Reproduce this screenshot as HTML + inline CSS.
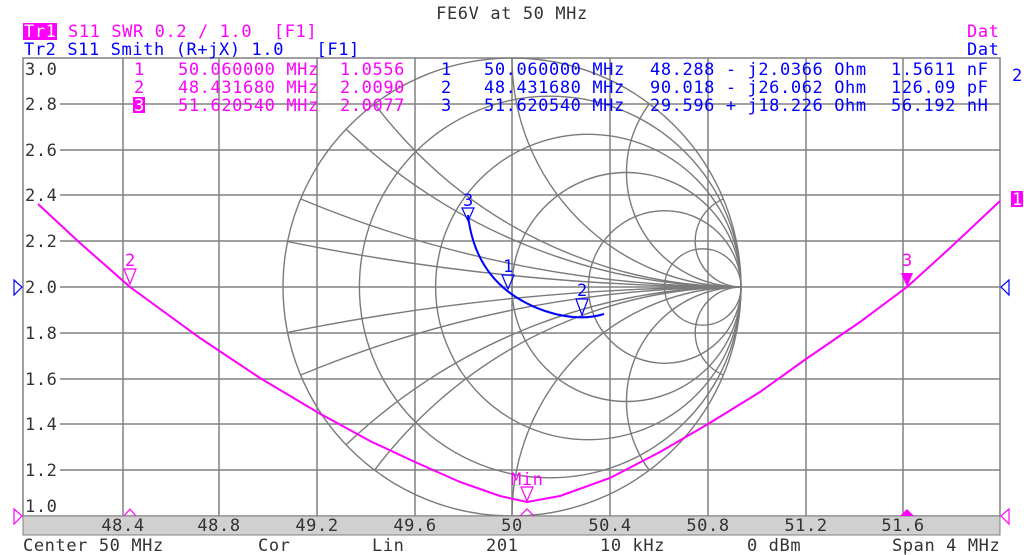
<!DOCTYPE html>
<html><head><meta charset="utf-8"><style>
html,body{margin:0;padding:0;background:#fff;width:1024px;height:555px;overflow:hidden;}
svg{display:block;}
text{font-family:"DejaVu Sans Mono","Liberation Mono",monospace;font-size:17px;letter-spacing:0.6px;}
</style></head><body>
<svg width="1024" height="555" viewBox="0 0 1024 555" xmlns="http://www.w3.org/2000/svg">
<defs><clipPath id="uc"><circle cx="512" cy="287" r="229"/></clipPath></defs>
<rect width="1024" height="555" fill="#fff"/>
<g stroke="#808080" stroke-width="1.5" fill="none">
<rect x="23" y="58" width="977" height="458"/>
<path d="M123 58V516M219 58V516M317 58V516M415 58V516M512 58V516M610 58V516M708 58V516M806 58V516M903 58V516"/>
<path d="M60 104H1000M60 150H1000M60 195H1000M60 241H1000M60 287H1000M60 333H1000M60 379H1000M60 424H1000M60 470H1000"/>
</g>
<g stroke="#7a7a7a" stroke-width="1.4" fill="none">
<circle cx="512" cy="287" r="229"/>
<circle cx="550.2" cy="287" r="190.8"/>
<circle cx="588.3" cy="287" r="152.7"/>
<circle cx="626.5" cy="287" r="114.5"/>
<circle cx="664.7" cy="287" r="76.3"/>
<circle cx="702.8" cy="287" r="38.2"/>
<g clip-path="url(#uc)">
<circle cx="741" cy="-858" r="1145"/><circle cx="741" cy="1432" r="1145"/>
<circle cx="741" cy="-171" r="458"/><circle cx="741" cy="745" r="458"/>
<circle cx="741" cy="58" r="229"/><circle cx="741" cy="516" r="229"/>
<circle cx="741" cy="172.5" r="114.5"/><circle cx="741" cy="401.5" r="114.5"/>
<circle cx="741" cy="241.2" r="45.8"/><circle cx="741" cy="332.8" r="45.8"/>
<circle cx="741" cy="-286" r="573"/><circle cx="741" cy="860" r="573"/>
<circle cx="741" cy="-1999" r="2286"/><circle cx="741" cy="2573" r="2286"/>
</g>
</g>
<g fill="#333">
<rect x="24" y="59" width="36" height="20" fill="#fff"/>
<text x="25" y="75">3.0</text>
<rect x="24" y="95" width="36" height="18" fill="#fff"/><text x="25" y="110">2.8</text>
<rect x="24" y="141" width="36" height="18" fill="#fff"/><text x="25" y="156">2.6</text>
<rect x="24" y="186" width="36" height="18" fill="#fff"/><text x="25" y="201">2.4</text>
<rect x="24" y="232" width="36" height="18" fill="#fff"/><text x="25" y="247">2.2</text>
<rect x="24" y="278" width="36" height="18" fill="#fff"/><text x="25" y="293">2.0</text>
<rect x="24" y="324" width="36" height="18" fill="#fff"/><text x="25" y="339">1.8</text>
<rect x="24" y="370" width="36" height="18" fill="#fff"/><text x="25" y="385">1.6</text>
<rect x="24" y="415" width="36" height="18" fill="#fff"/><text x="25" y="430">1.4</text>
<rect x="24" y="461" width="36" height="18" fill="#fff"/><text x="25" y="476">1.2</text>
<rect x="24" y="495" width="36" height="20" fill="#fff"/><text x="25" y="512">1.0</text>
</g>
<rect x="23" y="516" width="977" height="19" fill="#d0d0d0" stroke="#808080" stroke-width="1"/>
<g fill="#333" text-anchor="middle">
<text x="123" y="531">48.4</text><text x="219" y="531">48.8</text><text x="317" y="531">49.2</text><text x="415" y="531">49.6</text><text x="512" y="531">50</text><text x="610" y="531">50.4</text><text x="708" y="531">50.8</text><text x="806" y="531">51.2</text><text x="903" y="531">51.6</text>
</g>
<g fill="#333">
<text x="23" y="551">Center 50 MHz</text><text x="258" y="551">Cor</text><text x="372" y="551">Lin</text><text x="486" y="551">201</text><text x="600" y="551">10 kHz</text><text x="747" y="551">0 dBm</text><text x="892" y="551">Span 4 MHz</text>
<text x="512" y="19" text-anchor="middle">FE6V at 50 MHz</text>
</g>
<rect x="23" y="23" width="34" height="17" fill="#ff00ff"/>
<text x="24" y="37" fill="#fff">Tr1</text>
<text x="68" y="37" fill="#ff00ff" xml:space="preserve">S11 SWR 0.2 / 1.0  [F1]</text>
<text x="24" y="55" fill="#0000ff" xml:space="preserve">Tr2 S11 Smith (R+jX) 1.0   [F1]</text>
<text x="967" y="37" fill="#ff00ff">Dat</text>
<text x="967" y="55" fill="#0000ff">Dat</text>
<g fill="#ff00ff" xml:space="preserve">
<text x="134" y="75">1</text><text x="178" y="75">50.060000 MHz</text><text x="340" y="75">1.0556</text>
<text x="134" y="93">2</text><text x="178" y="93">48.431680 MHz</text><text x="340" y="93">2.0090</text>
<rect x="133" y="97" width="12" height="16"/><text x="134" y="111" fill="#fff">3</text><text x="178" y="111">51.620540 MHz</text><text x="340" y="111">2.0077</text>
</g>
<g fill="#0000ff" xml:space="preserve">
<text x="441" y="75">1</text><text x="484" y="75">50.060000 MHz</text><text x="650" y="75">48.288 - j2.0366 Ohm</text><text x="891" y="75">1.5611 nF</text>
<text x="441" y="93">2</text><text x="484" y="93">48.431680 MHz</text><text x="650" y="93">90.018 - j26.062 Ohm</text><text x="891" y="93">126.09 pF</text>
<text x="441" y="111">3</text><text x="484" y="111">51.620540 MHz</text><text x="650" y="111">29.596 + j18.226 Ohm</text><text x="891" y="111">56.192 nH</text>
<text x="1012" y="81">2</text>
</g>
<path d="M38 204 L80 243 L130 287 L200 338 L260 378 L317 412 L370 441 L415 462 L460 482 L500 496 L527 502 L560 496 L610 478 L660 452 L708 424 L760 392 L806 359 L860 322 L907 287 L950 248 L1000 201" fill="none" stroke="#ff00ff" stroke-width="2"/>
<path d="M468 215 Q476 287 545 311 Q578 322 604 314" fill="none" stroke="#0000ff" stroke-width="2"/>
<g fill="none" stroke="#ff00ff" stroke-width="1.2">
<path d="M124 269H136L130 284Z"/>
<path d="M521 487H533L527 501Z"/>
<path d="M124 516L130 509L136 516"/>
<path d="M520 516L527 509L534 516"/>
<path d="M14 509L22 516L14 524Z"/>
<path d="M1009 509L1001 516L1009 524Z"/>
</g>
<path d="M901 273H913L907 287Z" fill="#ff00ff"/>
<path d="M900 516L907 509L914 516Z" fill="#ff00ff"/>
<g fill="#ff00ff">
<text x="125" y="266">2</text><text x="902" y="266">3</text><text x="511" y="485">Min</text>
<rect x="1011" y="191" width="12" height="16"/><text x="1012" y="205" fill="#fff">1</text>
</g>
<g fill="none" stroke="#0000ff" stroke-width="1.2">
<path d="M462 208H474L468 221Z"/>
<path d="M502 275H514L508 289Z"/>
<path d="M576 299H588L582 315Z"/>
<path d="M14 280L22 287L14 295Z"/>
<path d="M1009 280L1001 287L1009 295Z"/>
</g>
<g fill="#0000ff">
<text x="463" y="206">3</text><text x="503" y="272">1</text><text x="577" y="296">2</text>
</g>
</svg>
</body></html>
